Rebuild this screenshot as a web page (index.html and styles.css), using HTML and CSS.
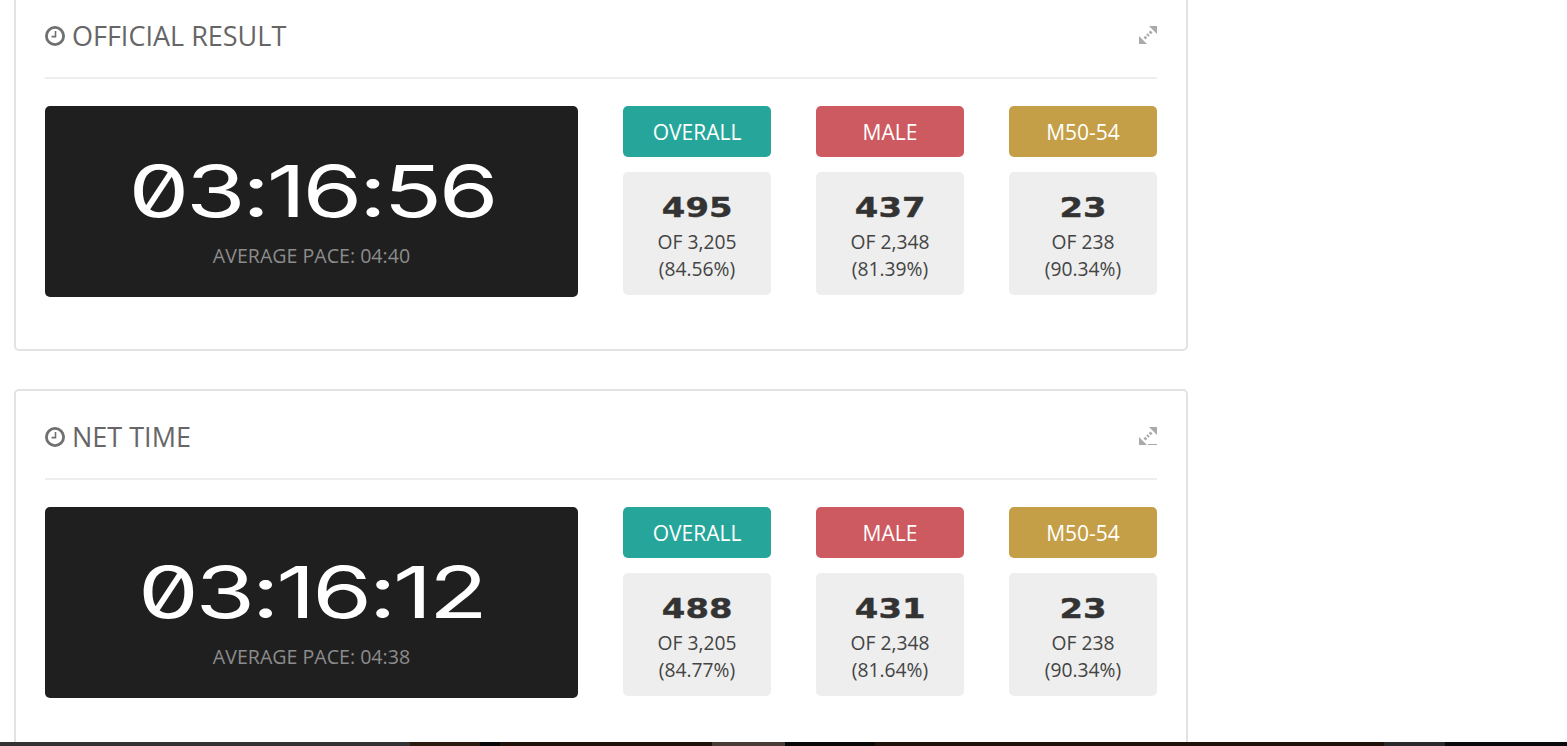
FILE: index.html
```html
<!DOCTYPE html>
<html lang="en">
<head>
<meta charset="utf-8">
<title>Race result</title>
<link rel="stylesheet" href="styles.css">
</head>
<body>
<main class="page">
  <section class="card">
    <header class="card-head">
      <h2 class="card-title">
        <svg class="clock" viewBox="0 0 20 20"><circle cx="10" cy="10" r="8.6"/><path d="M10.5 5v5.600H6.500"/></svg>
        OFFICIAL RESULT
      </h2>
      <svg class="expand" viewBox="0 0 20 20"><path d="M11 1h8v8zM9 19H1v-8z"/><path class="shaft" d="M13.500 6.500 6.500 13.500"/></svg>
    </header>
    <div class="result">
      <div class="clock-panel">
        <div class="time"><span class="time-text">03:16:56</span></div>
        <div class="pace">AVERAGE PACE: 04:40</div>
      </div>
      <div class="rank">
        <div class="rank-label teal">OVERALL</div>
        <div class="rank-box"><div class="rank-num"><span>495</span></div><div>OF 3,205</div><div>(84.56%)</div></div>
      </div>
      <div class="rank">
        <div class="rank-label red">MALE</div>
        <div class="rank-box"><div class="rank-num"><span>437</span></div><div>OF 2,348</div><div>(81.39%)</div></div>
      </div>
      <div class="rank">
        <div class="rank-label gold">M50-54</div>
        <div class="rank-box"><div class="rank-num"><span>23</span></div><div>OF 238</div><div>(90.34%)</div></div>
      </div>
    </div>
  </section>
  <section class="card">
    <header class="card-head">
      <h2 class="card-title">
        <svg class="clock" viewBox="0 0 20 20"><circle cx="10" cy="10" r="8.6"/><path d="M10.5 5v5.600H6.500"/></svg>
        NET TIME
      </h2>
      <svg class="expand" viewBox="0 0 20 20"><path d="M11 1h8v8zM9 19H1v-8z"/><path class="shaft" d="M13.500 6.500 6.500 13.500"/><path d="M10 18h9v1h-9z"/></svg>
    </header>
    <div class="result">
      <div class="clock-panel">
        <div class="time"><span class="time-text">03:16:12</span></div>
        <div class="pace">AVERAGE PACE: 04:38</div>
      </div>
      <div class="rank">
        <div class="rank-label teal">OVERALL</div>
        <div class="rank-box"><div class="rank-num"><span>488</span></div><div>OF 3,205</div><div>(84.77%)</div></div>
      </div>
      <div class="rank">
        <div class="rank-label red">MALE</div>
        <div class="rank-box"><div class="rank-num"><span>431</span></div><div>OF 2,348</div><div>(81.64%)</div></div>
      </div>
      <div class="rank">
        <div class="rank-label gold">M50-54</div>
        <div class="rank-box"><div class="rank-num"><span>23</span></div><div>OF 238</div><div>(90.34%)</div></div>
      </div>
    </div>
  </section>
</main>
<footer class="photo-strip"></footer>
</body>
</html>
```
FILE: styles.css
```css
html, body {
  margin: 0;
  height: 100%;
  overflow: hidden;
  background: #fff;
}
body {
  font-family: "Open Sans", "Liberation Sans", sans-serif;
  color: #444;
}
.page {
  width: 1174px;
  margin: -12px 0 0 14px;
  display: flex;
  flex-direction: column;
  gap: 38px;
}
.card {
  box-sizing: border-box;
  height: 363px;
  border: 2px solid #e3e3e3;
  border-radius: 5px;
  padding: 0 29px;
  background: #fff;
}
.card-head {
  height: 87px;
  border-bottom: 2px solid #eee;
  display: flex;
  justify-content: space-between;
  align-items: center;
}
.card-title {
  margin: 0;
  padding-top: 3px;
  font-size: 27px;
  font-weight: 400;
  color: #666;
  display: flex;
  align-items: center;
  gap: 7px;
}
.clock {
  width: 20px;
  height: 20px;
  margin-top: 2px;
  fill: none;
  stroke: #707070;
  stroke-width: 2.8;
}
.clock path { stroke-width: 1.6; }
.expand {
  width: 20px;
  height: 20px;
  margin: 2px -1px 0 0;
  fill: #aaa;
}
.shaft {
  stroke: #aaa;
  stroke-width: 3;
  stroke-dasharray: 2.500 1.500 2 1.500 2.500;
  fill: none;
}
.result {
  margin-top: 27px;
  display: flex;
  gap: 45px;
}
.clock-panel {
  width: 533px;
  height: 191px;
  box-sizing: border-box;
  background: #1f1f1f;
  border-radius: 5px;
  text-align: center;
  padding-top: 35px;
}
.time {
  height: 100px;
  line-height: 100px;
  font-family: Inter, "Liberation Sans", sans-serif;
  font-size: 72px;
  font-weight: 400;
  letter-spacing: -2.500px;
  color: #fff;
  font-feature-settings: "zero";
}
.time-text {
  display: inline-block;
  transform: scaleX(1.34);
}
.pace {
  margin-top: 1px;
  font-size: 19.6px;
  color: #8c8c8c;
}
.rank {
  width: 148px;
  display: flex;
  flex-direction: column;
  gap: 15px;
}
.rank-label {
  height: 51px;
  line-height: 53px;
  border-radius: 5px;
  color: #fff;
  font-size: 21px;
  text-align: center;
}
.teal { background: #26a69a; }
.red { background: #cd5a60; }
.gold { background: #c49f47; }
.rank-box {
  height: 123px;
  box-sizing: border-box;
  padding-top: 21px;
  background: #eee;
  border-radius: 5px;
  text-align: center;
  font-size: 19.25px;
  line-height: 27px;
}
.rank-num {
  height: 35px;
  line-height: 31px;
  font-family: "DejaVu Sans", sans-serif;
  font-weight: 700;
  font-size: 26px;
  color: #333;
  -webkit-text-stroke: 0.4px #333;
}
.rank-num span {
  display: inline-block;
  transform: scaleX(1.3);
}
.photo-strip {
  position: fixed;
  left: 0;
  right: 0;
  bottom: 0;
  height: 4px;
  background: linear-gradient(to right, #333 0 410px, #2a1a10 410px 480px, #080808 480px 500px, #1f120a 500px 712px, #4a3a35 712px 785px, #0a0807 785px 875px, #1f120a 875px 1384px, #2a2a2a 1384px 1445px, #0a0a0a 1445px);
}
```
